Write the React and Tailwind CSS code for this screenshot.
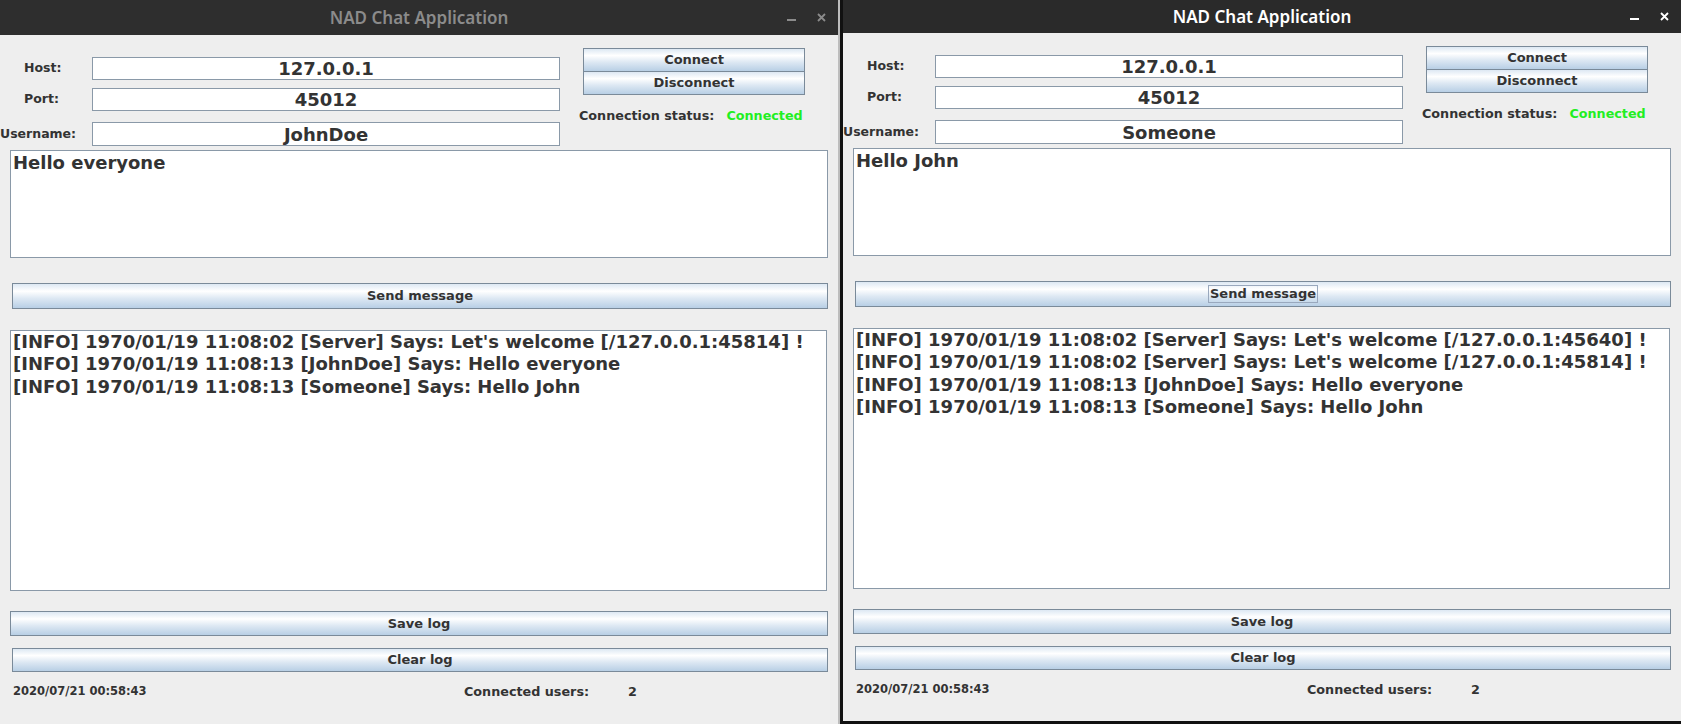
const btnBg =
  'border border-[#7a8a99] bg-[linear-gradient(to_bottom,#dde8f3_0%,#ffffff_30%,#dde8f3_60%,#b8cfe5_100%)]';

const Button = ({ label, focused, className = '' }) => (
  <div className={`flex items-center justify-center text-[13px] font-bold text-[#333333] ${btnBg} ${className}`}>
    <span className={focused ? 'border border-[#99a8bd] px-px leading-[16px]' : 'leading-[16px]'}>{label}</span>
  </div>
);

const Field = ({ value, className = '' }) => (
  <div className={`flex items-center justify-center w-[468px] h-[23px] bg-white border border-[#8a99a8] text-[18px] font-bold text-[#333333] ${className}`}>
    {value}
  </div>
);

const TitleBar = ({ active, height }) => (
  <div className={`relative flex items-center justify-center shrink-0 ${height} ${active ? 'bg-[#2a2a2a]' : 'bg-[#2e2e2e]'}`}>
    <span
      className={`font-['Noto_Sans',sans-serif] text-[17px] font-semibold ${active ? 'text-white' : 'text-[#8b8b8b]'}`}
    >
      NAD Chat Application
    </span>
    <div className="absolute right-[12px] top-0 h-full flex items-center gap-[21px]">
      <svg width="9" height="9" viewBox="0 0 9 9">
        <rect x="0" y="6" width="9" height="2" fill={active ? '#ffffff' : '#8b8b8b'} />
      </svg>
      <svg width="9" height="9" viewBox="0 0 9 9">
        <path d="M1 1 L8 8 M8 1 L1 8" stroke={active ? '#ffffff' : '#8b8b8b'} strokeWidth="1.8" />
      </svg>
    </div>
  </div>
);

const ChatPanel = ({ username, message, logs, focused }) => (
  <div className="flex-1 bg-[#eeeeee] text-[#333333] font-['DejaVu_Sans',sans-serif]">
    {/* connection settings */}
    <div className="flex">
      <div className="flex flex-col pt-[22px]">
        <div className="flex items-center h-[23px]">
          <span className="w-[92px] pl-[24px] text-[12.5px] font-bold">Host:</span>
          <Field value="127.0.0.1" />
        </div>
        <div className="flex items-center h-[23px] mt-[8px]">
          <span className="w-[92px] pl-[24px] text-[12.5px] font-bold">Port:</span>
          <Field value="45012" />
        </div>
        <div className="flex items-center h-[24px] mt-[11px]">
          <span className="w-[92px] text-[12.5px] font-bold">Username:</span>
          <Field value={username} className="h-[24px]" />
        </div>
      </div>
      <div className="flex flex-col ml-[23px] w-[222px] pt-[13px]">
        <Button label="Connect" className="h-[24px]" />
        <Button label="Disconnect" className="h-[23px] border-t-0" />
        <div className="flex mt-[13px] -ml-[4px] text-[12.75px] font-bold leading-[16px] whitespace-nowrap">
          <span>Connection status:</span>
          <span className="ml-[12px] text-[#22ee22]">Connected</span>
        </div>
      </div>
    </div>

    {/* message input */}
    <div className="ml-[10px] mt-[4px] w-[818px] h-[108px] bg-white border border-[#8a99a8] px-[2px] pt-px text-[18px] font-bold leading-[21px]">
      {message}
    </div>

    <Button label="Send message" focused={focused} className="ml-[12px] mt-[25px] w-[816px] h-[26px]" />

    {/* log */}
    <div className="ml-[10px] mt-[21px] w-[817px] h-[261px] bg-white border border-[#8a99a8] px-[2px] text-[18px] font-bold leading-[22.25px] whitespace-nowrap overflow-hidden">
      {logs.map((line, i) => (
        <div key={i}>{line}</div>
      ))}
    </div>

    <Button label="Save log" className="ml-[10px] mt-[20px] w-[818px] h-[25px]" />
    <Button label="Clear log" className="ml-[12px] mt-[12px] w-[816px] h-[24px]" />

    {/* footer */}
    <div className="flex items-center mt-[12px] h-[16px] text-[11.5px] font-bold">
      <span className="w-[464px] pl-[13px]">2020/07/21 00:58:43</span>
      <span className="w-[164px] text-[12.75px]">Connected users:</span>
      <span className="text-[12.75px]">2</span>
    </div>
  </div>
);

export default function App() {
  const logsA = [
    "[INFO] 1970/01/19 11:08:02 [Server] Says: Let's welcome [/127.0.0.1:45814] !",
    '[INFO] 1970/01/19 11:08:13 [JohnDoe] Says: Hello everyone',
    '[INFO] 1970/01/19 11:08:13 [Someone] Says: Hello John',
  ];
  const logsB = [
    "[INFO] 1970/01/19 11:08:02 [Server] Says: Let's welcome [/127.0.0.1:45640] !",
    "[INFO] 1970/01/19 11:08:02 [Server] Says: Let's welcome [/127.0.0.1:45814] !",
    '[INFO] 1970/01/19 11:08:13 [JohnDoe] Says: Hello everyone',
    '[INFO] 1970/01/19 11:08:13 [Someone] Says: Hello John',
  ];

  return (
    <div className="flex w-[1681px] h-[724px] overflow-hidden bg-[#1c1c1c]">
      {/* inactive window */}
      <div className="flex flex-col w-[838px] h-[724px] shrink-0">
        <TitleBar active={false} height="h-[35px]" />
        <ChatPanel username="JohnDoe" message="Hello everyone" logs={logsA} />
      </div>
      <div className="w-[2px] shrink-0 bg-[#bdbdbd]" />
      {/* active window */}
      <div className="flex flex-col w-[841px] h-[724px] shrink-0 border-l-[3px] border-b-[3px] border-[#111111]">
        <TitleBar active height="h-[33px]" />
        <ChatPanel username="Someone" message="Hello John" logs={logsB} focused />
      </div>
    </div>
  );
}
